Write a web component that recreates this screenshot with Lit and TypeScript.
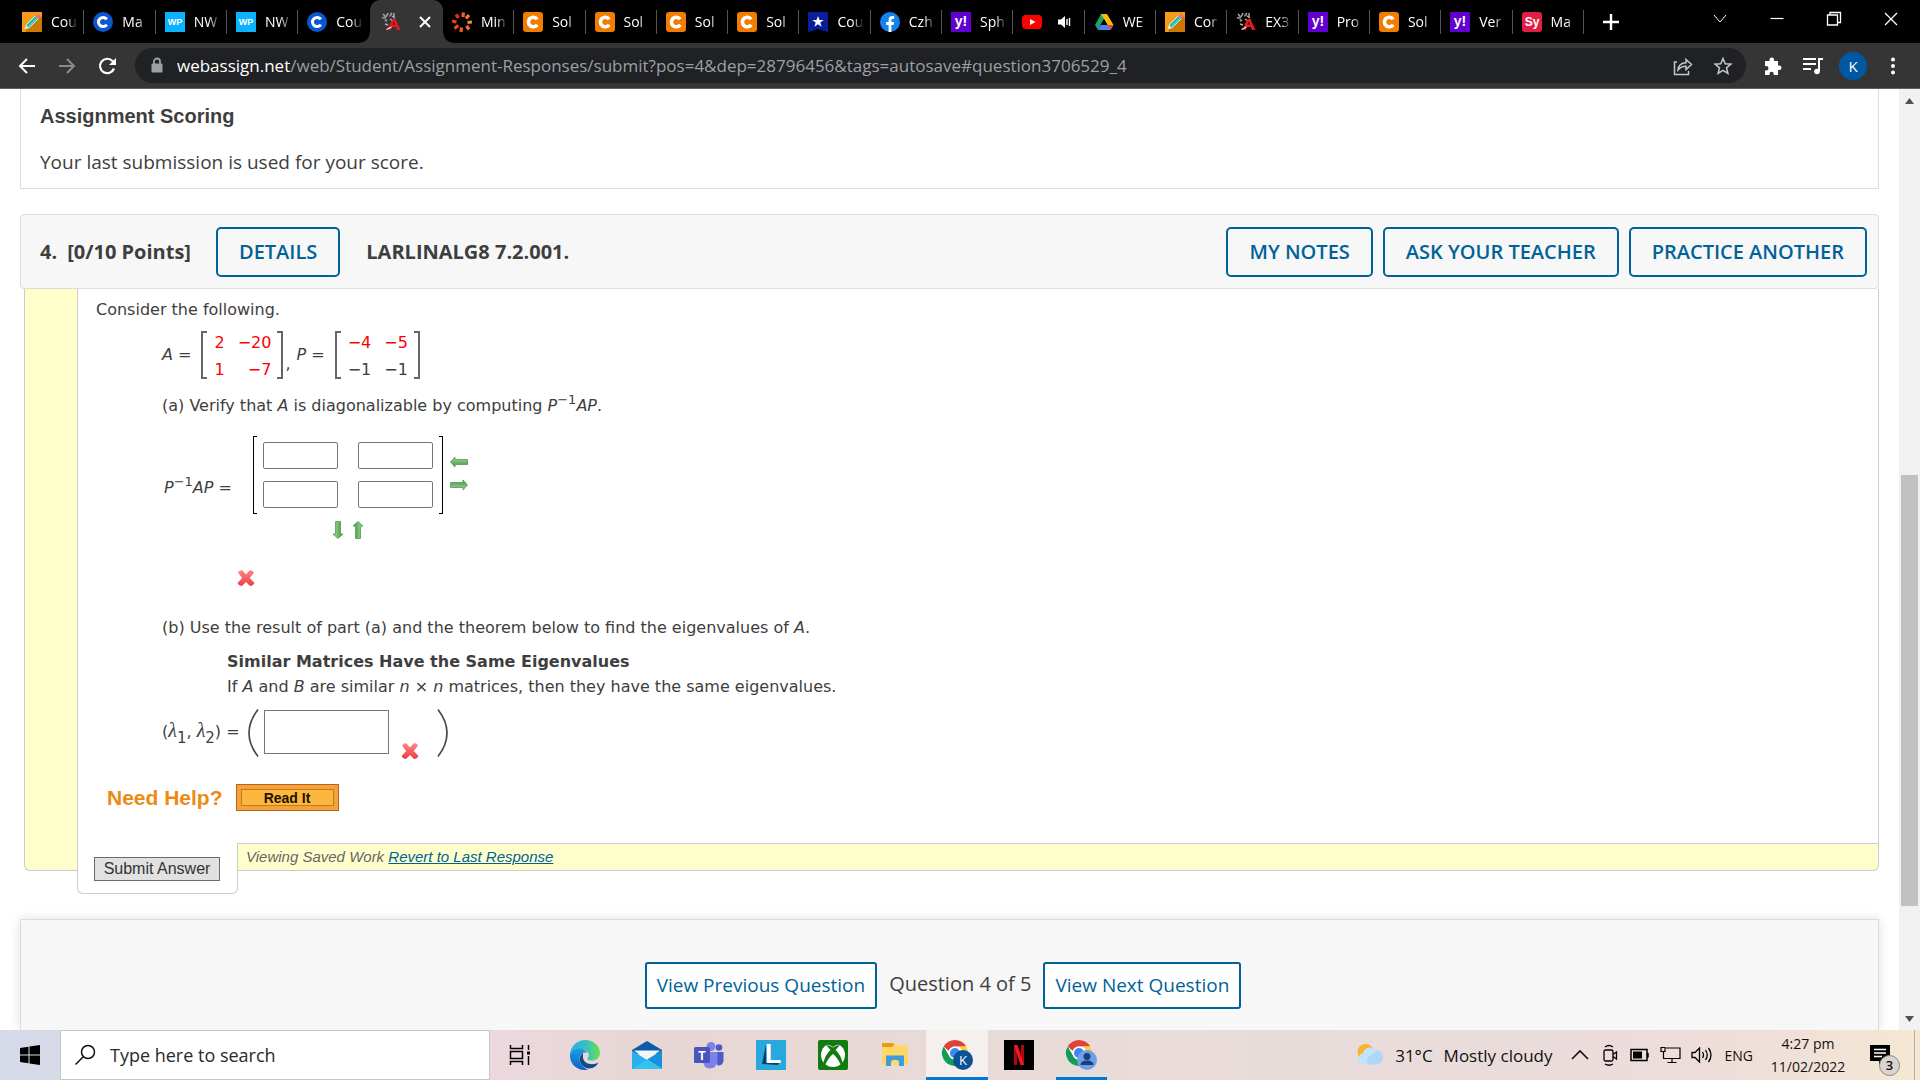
import { LitElement, html, css, svg, TemplateResult } from "lit";
import { customElement, property } from "lit/decorators.js";
import { classMap } from "lit/directives/class-map.js";

const letterTile = (bg: string, text: string, size: number, radius = 0, y = 15) => html`
  <svg class="fav" viewBox="0 0 20 20" aria-hidden="true">
    <rect width="20" height="20" rx=${radius} fill=${bg} />
    <text x="10" y=${y} font-size=${size} font-weight="700" fill="#fff" text-anchor="middle"
      font-family="Liberation Sans, sans-serif">${text}</text>
  </svg>`;

const favicons: Record<string, () => TemplateResult> = {
  pencil: () => html`<svg class="fav" viewBox="0 0 20 20" aria-hidden="true">
    <rect width="20" height="20" fill="#f59a1b" /><path d="M17 3 20 6v14H4l-1-3z" fill="#c97800" />
    <path d="M3 17l1.500-4.500L13.500 3.500l3 3L7.500 15.500z" fill="#35d0c0" stroke="#e8f6f4" stroke-width=".8" />
    <path d="M13 4l1.500-1.500q1-.8 2 .2l.8.8q1 1 0 2L16 7z" fill="#ef6f8f" />
    <path d="M3 17l1.200-3.600 2.400 2.400z" fill="#fbe3b4" /><path d="M5.500 13.500l8-8" stroke="#0f9f96" stroke-width="1" />
  </svg>`,
  coursera: () => html`<svg class="fav" viewBox="0 0 20 20" aria-hidden="true">
    <circle cx="10" cy="10" r="10" fill="#0a57d0" />
    <path d="M13.800 7.300A4.600 4.600 0 1 0 13.800 12.700" fill="none" stroke="#fff" stroke-width="3" /></svg>`,
  wp: () => letterTile("#0ab3fb", "WP", 9, 0, 13),
  chegg: () => html`<svg class="fav" viewBox="0 0 20 20" aria-hidden="true">
    <rect width="20" height="20" rx="3" fill="#f07c00" />
    <path d="M14.200 7.300A4.800 4.800 0 1 0 14.200 12.700" fill="none" stroke="#fff" stroke-width="3.600" /></svg>`,
  yahoo: () => letterTile("#6001d2", "y!", 14, 0, 14),
  symbolab: () => letterTile("#e01f46", "Sy", 12, 3, 14),
  webassign: () => html`<svg class="fav" viewBox="0 0 20 20" aria-hidden="true">
    <path d="M2 2l2 2M7 1l-2 4M9 3l2-2M13 1v5M1 6l4-1M4 9l2-1M9 7l3 2M4 12l3 1M11 4l3 2" stroke="#b0b0b0" stroke-width="1.400" />
    <path d="M2 5l3 3M8 4l3-1" stroke="#777" stroke-width="1.400" />
    <path d="M6 18L11.500 7l3 0 5 11h-3.500l-1.300-3h-3.600l-1.600 3z" fill="#e01b22" />
    <path d="M11.500 12.500h2.500l-1.200-3z" fill="#3a0508" /><path d="M5.500 17.500l5-2.500" stroke="#eee" stroke-width="1.200" />
  </svg>`,
  miro: () => html`<svg class="fav" viewBox="0 0 20 20" aria-hidden="true">
    <g stroke-width="3.200" fill="none">
      <path d="M11.500 .5l-.6 4.500" stroke="#ff5a3c" /><path d="M17 3l-3 3.500" stroke="#ff7a2c" />
      <path d="M20 10l-4.500 .5" stroke="#ff8a20" /><path d="M17 17.500l-2.500-3.700" stroke="#ff6b1f" />
      <path d="M9 20l.5-4.500" stroke="#ff5722" /><path d="M2.500 16.500l3.700-3" stroke="#f04a20" />
      <path d="M0 9l4.500 1" stroke="#e8401c" /><path d="M4 2.500l2.500 3.500" stroke="#d8361c" />
    </g></svg>`,
  star: () => html`<svg class="fav" viewBox="0 0 20 20" aria-hidden="true">
    <path d="M0 0h20v20l-10-3-10 3z" fill="#0a1e9c" />
    <path d="M10 4l1.500 4h4.200l-3.400 2.600 1.300 4.100L10 12.200l-3.600 2.500 1.300-4.100L4.300 8h4.200z" fill="#fff" />
  </svg>`,
  facebook: () => html`<svg class="fav" viewBox="0 0 20 20" aria-hidden="true">
    <circle cx="10" cy="10" r="10" fill="#1483f0" />
    <path d="M8.600 20v-7H6.200v-3h2.400V8q0-4 3.800-4 1 0 1.800.2v2.500h-1.300q-1.500 0-1.500 1.500V10h2.700l-.5 3h-2.200v7z" fill="#fff" />
  </svg>`,
  youtube: () => html`<svg class="fav" viewBox="0 0 20 20" aria-hidden="true">
    <rect y="3" width="20" height="14" rx="4" fill="#f00" /><path d="M8 7l5.500 3L8 13z" fill="#fff" />
  </svg>`,
  drive: () => html`<svg class="fav" viewBox="0 0 20 20" aria-hidden="true">
    <path d="M7 2h6L6.500 13 4 18 1 13z" fill="#1ea362" /><path d="M7 2h6l6.500 11h-6z" fill="#fbbc04" />
    <path d="M6.500 13H19.500l-3 5H4z" fill="#4285f4" /><path d="M13.500 13h6l-3 5z" fill="#ea4335" />
    <path d="M10 7.200L13.400 13H6.600z" fill="#000" />
  </svg>`,
};

interface Tab { icon: string; title: string; active?: boolean; audio?: boolean; }
const tabs: Tab[] = [
  { icon: "pencil", title: "Cou" }, { icon: "coursera", title: "Ma" },
  { icon: "wp", title: "NW" }, { icon: "wp", title: "NW" },
  { icon: "coursera", title: "Cou" }, { icon: "webassign", title: "", active: true },
  { icon: "miro", title: "Min" }, { icon: "chegg", title: "Sol" },
  { icon: "chegg", title: "Sol" }, { icon: "chegg", title: "Sol" },
  { icon: "chegg", title: "Sol" }, { icon: "star", title: "Cou" },
  { icon: "facebook", title: "Czh" }, { icon: "yahoo", title: "Sph" },
  { icon: "youtube", title: "", audio: true }, { icon: "drive", title: "WE" },
  { icon: "pencil", title: "Cor" }, { icon: "webassign", title: "EX3" },
  { icon: "yahoo", title: "Pro" }, { icon: "chegg", title: "Sol" },
  { icon: "yahoo", title: "Ver" }, { icon: "symbolab", title: "Ma" },
];

const lineIcon = (body: TemplateResult, size = 20, width = 2) => html`
  <svg width=${size} height=${size} viewBox="0 0 20 20" fill="none" stroke="currentColor"
    stroke-width=${width} aria-hidden="true">${body}</svg>`;

@customElement("browser-chrome")
export class BrowserChrome extends LitElement {
  static styles = css`
    :host { display: block; font-family: "Open Sans", "Noto Sans", sans-serif; color: #fff; }
    button { border: 0; padding: 0; margin: 0; background: none; color: inherit; font: inherit;
      display: flex; align-items: center; justify-content: center; flex: none; }
    svg { display: block; flex: none; }
    .strip { display: flex; height: 43px; background: #000; padding-left: 13px; }
    .tabs { display: flex; flex: 1; min-width: 0; }
    .tab { flex: 1 1 0; min-width: 0; justify-content: flex-start; padding: 0 3px 0 9px; gap: 9px;
      position: relative; font-size: 14px; line-height: 20px; }
    .tab::after { content: ""; position: absolute; right: 0; top: 10px; height: 24px; width: 1px; background: #555; }
    .tab.active, .tab.plain { z-index: 1; }
    .tab.plain::after, .tab.active::after { display: none; }
    .tab.active { background: #353535; border-radius: 10px 10px 0 0; gap: 14px; padding-left: 11px; }
    .tab.audio { gap: 12px; }
    .flare { position: absolute; bottom: 0; width: 10px; height: 10px; }
    .flare.left { left: -10px; background: radial-gradient(circle at 0 0, #0000 9px, #353535 10px); }
    .flare.right { right: -10px; background: radial-gradient(circle at 100% 0, #0000 9px, #353535 10px); }
    .fav { width: 20px; height: 20px; }
    .title { flex: 1; min-width: 0; white-space: nowrap; text-align: left;
      -webkit-mask-image: linear-gradient(90deg, #000 15px, #0000 27px); mask-image: linear-gradient(90deg, #000 15px, #0000 27px); }
    .controls { display: flex; width: 336px; flex: none; }
    .newtab { width: 54px; margin-right: 53px; }
    .win { width: 57px; height: 38px; }
    .bar { display: flex; align-items: center; height: 45px; background: #353535; border-bottom: 1px solid #5f6061;
      padding: 0 7px; }
    .nav { width: 40px; height: 35px; }
    .dim { color: #8a8a8a; }
    .omnibox { flex: 1; min-width: 0; display: flex; align-items: center; height: 35px; border-radius: 18px;
      background: #202124; margin: 0 7px 0 8px; padding: 0 3px 0 14px; font-size: 17px; line-height: 24px; }
    .lock { margin-right: 12px; }
    .path { flex: 1; min-width: 0; border: 0; outline: 0; padding: 0; background: none; font: inherit; color: #9aa0a6; }
    .avatar { width: 28px; height: 28px; border-radius: 50%; background: #0058a3; font-size: 15px; margin: 0 6px; }
    .soft { color: #c4c7c5; }
  `;
  render() {
    return html`
      <div class="strip">
        <div class="tabs" role="tablist">
          ${tabs.map((t, i) => html`
            <button role="tab" aria-selected=${t.active ? "true" : "false"}
              class=${classMap({ tab: true, active: !!t.active, audio: !!t.audio, plain: !!tabs[i + 1]?.active })}>
              ${t.active ? html`<span class="flare left"></span><span class="flare right"></span>` : ""}
              ${favicons[t.icon]()}
              ${t.active ? lineIcon(svg`<path d="M5 5l10 10M15 5L5 15" />`, 20) : ""}
              ${t.audio ? html`<svg width="20" height="16" viewBox="0 0 20 16" aria-hidden="true">
                <path d="M4 5.500h3l4-3.500v12L7 10.500H4z" fill="#fff" />
                <path d="M13 5v6M15.500 4v8" stroke="#fff" stroke-width="1.400" /></svg>` : ""}
              ${t.title ? html`<span class="title">${t.title}</span>` : ""}
            </button>`)}
        </div>
        <div class="controls">
          <button class="newtab" aria-label="New tab">${lineIcon(svg`<path d="M10 2v16M2 10h16" />`, 20, 2.4)}</button>
          <button class="win" aria-label="Search tabs">${lineIcon(svg`<path d="M4 6l6 7 6-7" />`, 20, 1)}</button>
          <button class="win" aria-label="Minimise">${lineIcon(svg`<path d="M3.500 9.500h13" />`, 20, 1.2)}</button>
          <button class="win" aria-label="Restore">${lineIcon(svg`<path d="M3.500 6h10v10h-10zM6 6V3.500h10.500V13.500H13.500" />`, 20, 1.3)}</button>
          <button class="win" aria-label="Close">${lineIcon(svg`<path d="M4 4l12 12M16 4L4 16" />`, 20, 1.3)}</button>
        </div>
      </div>
      <div class="bar">
        <button class="nav" aria-label="Back">${lineIcon(svg`<path d="M18 10H3M10 3l-7 7 7 7" />`)}</button>
        <button class="nav dim" aria-label="Forward">${lineIcon(svg`<path d="M2 10h15M10 3l7 7-7 7" />`)}</button>
        <button class="nav" aria-label="Reload">${lineIcon(svg`<path d="M17 12.500A7.200 7.200 0 1 1 15.500 5l2 2" /><path d="M19 2v7h-7z" fill="currentColor" stroke="none" />`, 20, 2.2)}</button>
        <div class="omnibox">
          <svg class="lock" width="16" height="18" viewBox="0 0 16 18" aria-hidden="true">
            <rect x="2.500" y="6.500" width="11" height="9" rx="1" fill="#9aa0a6" />
            <path d="M5 7V4.500a3 3 0 0 1 6 0V7" fill="none" stroke="#9aa0a6" stroke-width="1.800" /></svg>
          <label for="url">webassign.net</label><input id="url" class="path"
            value="/web/Student/Assignment-Responses/submit?pos=4&dep=28796456&tags=autosave#question3706529_4" />
          <button class="nav soft" aria-label="Share">${lineIcon(svg`<path d="M4 6H1.500v12.500h14V15M5 14q.5-7 8-7.300V3.500l5.500 5-5.500 5v-3.200Q8 10.300 5 14z" />`, 20, 1.5)}</button>
          <button class="nav soft" aria-label="Bookmark">${lineIcon(svg`<path d="M10 2.500l2.200 5.300 5.700.4-4.400 3.600 1.400 5.600-4.900-3.100-4.900 3.100 1.400-5.600L2.100 8.200l5.700-.4z" />`, 20, 1.5)}</button>
        </div>
        <button class="nav" aria-label="Extensions"><svg width="20" height="20" viewBox="0 0 20 20" aria-hidden="true">
          <path d="M2 5h4.500V3.800a2.300 2.300 0 0 1 4.600 0V5H15v4.500h1.200a2.300 2.300 0 0 1 0 4.600H15V19h-4.300v-1.200a2.100 2.100 0 0 0-4.200 0V19H2v-4.500h1.200a2.300 2.300 0 0 0 0-4.600H2z" fill="#fff" /></svg></button>
        <button class="nav" aria-label="Media">${lineIcon(svg`<path d="M0 3h13M0 8h13M0 13h8M16 15V3h4" /><circle cx="14" cy="15.500" r="2.800" fill="currentColor" stroke="none" />`, 20, 2)}</button>
        <button class="avatar" aria-label="Profile">K</button>
        <button class="nav" aria-label="Menu"><svg width="6" height="20" viewBox="0 0 6 20" aria-hidden="true">
          <g fill="#fff"><circle cx="3" cy="3.500" r="2" /><circle cx="3" cy="10" r="2" /><circle cx="3" cy="16.500" r="2" /></g></svg></button>
      </div>`;
  }
}

@customElement("num-matrix")
export class NumMatrix extends LitElement {
  @property({ attribute: false }) rows: { v: string; red?: boolean }[][] = [];
  static styles = css`
    :host { display: inline-flex; align-items: center; height: 48px; }
    .edge { box-sizing: border-box; width: 6px; align-self: stretch; border: 2px solid #666; }
    .l { border-right: 0; } .r { border-left: 0; }
    table { border-collapse: collapse; margin-top: 2px; }
    td { padding: 0 6px 0 7px; text-align: right; line-height: 27px; }
    .red { color: #f00; }
  `;
  render() {
    return html`<span class="edge l"></span>
      <table><tbody>${this.rows.map(r => html`<tr>${r.map(c => html`<td class=${c.red ? "red" : ""}>${c.v}</td>`)}</tr>`)}</tbody></table>
      <span class="edge r"></span>`;
  }
}

const cross = html`<svg width="18" height="18" viewBox="0 0 18 18" role="img" aria-label="Incorrect">
  <defs><linearGradient id="x" x2="0" y2="1"><stop offset="0" stop-color="#ff8585" /><stop offset="1" stop-color="#ea3f46" /></linearGradient></defs>
  <path d="M1 3.500Q3.500 .5 5.500 1.500L9 5.500 12.500 1.500q2.500-1 4.500 2L12.800 9l4.700 5q-1.500 3.500-4.500 3L9 13 5 17q-3 .5-4.500-3L5.200 9z" fill="url(#x)" />
</svg>`;

const arrow = (angle: number) => html`
  <svg width="18" height="18" viewBox="0 0 18 18" aria-hidden="true">
    <defs><linearGradient id="g" x2="0" y2="1"><stop offset="0" stop-color="#a5dc9c" /><stop offset="1" stop-color="#3f9142" /></linearGradient></defs>
    <path transform="rotate(${angle} 9 9)" d="M.5 9L5 4v2.500h12.500v5H5V14z" fill="url(#g)" stroke="#4d9c50" stroke-width=".8" />
  </svg>`;

const inv = html`<i>P</i><sup>−1</sup><i>AP</i>`;

@customElement("question-card")
export class QuestionCard extends LitElement {
  static styles = css`
    :host { display: block; }
    svg { display: block; }
    .head { display: flex; align-items: center; height: 73px; border: 1px solid #ddd; border-radius: 4px;
      background: #f7f7f7; padding: 0 11px 0 19px; gap: 10px; font-size: 20px; }
    .head strong { font-weight: 700; }
    .head .code { margin-left: 16px; flex: 1; }
    .head .pts { margin-right: 15px; }
    .btn { height: 50px; padding: 0 21px; border: 2px solid #006298; border-radius: 5px; background: none;
      color: #006298; font: 600 20px/24px "Open Sans", sans-serif; }
    .body { display: flex; margin-left: 4px; }
    .strip { width: 52px; flex: none; margin-bottom: 23px; background: #ffc; border: 1px solid #ccc; border-top: 0; border-right: 0;
      border-radius: 0 0 0 6px; }
    .main { flex: 1; min-width: 0; }
    .problem { border: 1px solid #ccc; border-width: 0 1px; padding: 11px 0 32px 18px;
      font: 16px/20px "DejaVu Sans", Verdana, sans-serif; color: #3e3e3e; }
    p { margin: 0; }
    sup, sub { line-height: 0; }
    sup { font-size: 13px; vertical-align: 7px; } sub { font-size: 15px; vertical-align: -6px; }
    .indent { padding-left: 66px; }
    .given { display: flex; align-items: center; height: 48px; margin: 11px 0 17px; }
    .given num-matrix { margin-left: 10px; }
    .given .comma { align-self: flex-end; margin: 0 6px 5px 2px; }
    .answer { display: flex; align-items: center; margin-top: 20px; padding-left: 2px; gap: 21px; }
    .grid { display: grid; grid-template-columns: auto auto; column-gap: 7px; row-gap: 7px; }
    .mat { display: grid; grid-template-columns: 75px 75px; gap: 12px 20px; padding: 6px 10px; position: relative; }
    .mat::before, .mat::after { content: ""; position: absolute; top: 0; bottom: 0; width: 3px; border: 1px solid #000; }
    .mat::before { left: 0; border-right: 0; } .mat::after { right: 0; border-left: 0; }
    .cell, .wide { box-sizing: border-box; border: 1px solid #767676; border-radius: 2px; background: #fff; padding: 1px 4px; font: inherit; }
    .cell { width: 75px; height: 27px; }
    .wide { width: 125px; height: 44px; border-radius: 0; margin: 1px 12px 0 5px; }
    .steps { display: flex; align-items: center; justify-content: center; gap: 2px; }
    .steps.v { flex-direction: column; gap: 5px; padding-bottom: 4px; }
    .step { border: 0; padding: 0; margin: 0; background: none; display: block; }
    .mark { margin: 30px 0 31px 141px; }
    .theorem { margin: 11px 0 10px 65px; line-height: 25px; }
    .pair { display: flex; height: 51px; }
    .pair label { padding-top: 13px; margin-right: 7px; }
    .pair .x { align-self: flex-end; margin-right: 18px; }
    .lam { font-family: "Liberation Serif", serif; font-size: 20px; font-style: italic; line-height: 0; }
    .help { display: flex; align-items: center; gap: 13px; margin: 24px 0 0 11px; }
    .need { font: 700 21px/27px "Liberation Sans", sans-serif; color: #ec8a14; }
    .read { box-sizing: border-box; width: 103px; height: 27px; padding: 0; border: 1px solid #b5651d; background: #fbb83c;
      box-shadow: inset 0 0 0 4px #f6a13a, inset 0 0 0 5px #c27b20; font: 700 14px/20px "Liberation Sans", sans-serif; color: #1c1200; }
    .foot { display: flex; align-items: flex-start; }
    .submit { box-sizing: border-box; width: 161px; height: 51px; border: 1px solid #ccc; border-top: 0; border-radius: 0 0 6px 6px;
      padding: 14px 0 0 16px; flex: none; }
    .submit button { box-sizing: border-box; width: 126px; height: 24px; padding: 0; border: 1px solid #6b6b6b; background: #e1e1e1;
      font: 16px/20px "Liberation Sans", sans-serif; color: #333; }
    .saved { flex: 1; box-sizing: border-box; height: 28px; background: #ffc; border: 1px solid #ccc; border-left: 0;
      border-radius: 0 0 6px 0; padding-left: 8px; font: italic 15px/26px "Liberation Sans", sans-serif; color: #666; }
    .saved a { color: #006298; }
  `;
  render() {
    return html`
      <header class="head">
        <strong>4.</strong><strong class="pts">[0/10 Points]</strong>
        <button class="btn">DETAILS</button>
        <strong class="code">LARLINALG8 7.2.001.</strong>
        <button class="btn">MY NOTES</button>
        <button class="btn">ASK YOUR TEACHER</button>
        <button class="btn">PRACTICE ANOTHER</button>
      </header>
      <div class="body">
        <div class="strip"></div>
        <div class="main">
          <section class="problem">
            <p>Consider the following.</p>
            <div class="indent">
              <div class="given">
                <span><i>A</i> =</span>
                <num-matrix .rows=${[[{ v: "2", red: true }, { v: "−20", red: true }], [{ v: "1", red: true }, { v: "−7", red: true }]]}></num-matrix>
                <span class="comma">,</span><span><i>P</i> =</span>
                <num-matrix .rows=${[[{ v: "−4", red: true }, { v: "−5", red: true }], [{ v: "−1" }, { v: "−1" }]]}></num-matrix>
              </div>
              <p>(a) Verify that <i>A</i> is diagonalizable by computing ${inv}.</p>
              <div class="answer">
                <span>${inv} =</span>
                <div class="grid">
                  <div class="mat">
                    <input class="cell" aria-label="Row 1, column 1" /><input class="cell" aria-label="Row 1, column 2" />
                    <input class="cell" aria-label="Row 2, column 1" /><input class="cell" aria-label="Row 2, column 2" />
                  </div>
                  <div class="steps v">
                    <button class="step" aria-label="Remove column">${arrow(0)}</button>
                    <button class="step" aria-label="Add column">${arrow(180)}</button>
                  </div>
                  <div class="steps">
                    <button class="step" aria-label="Add row">${arrow(-90)}</button>
                    <button class="step" aria-label="Remove row">${arrow(90)}</button>
                  </div>
                </div>
              </div>
            </div>
            <div class="mark">${cross}</div>
            <div class="indent">
              <p>(b) Use the result of part (a) and the theorem below to find the eigenvalues of <i>A</i>.</p>
              <div class="theorem">
                <strong>Similar Matrices Have the Same Eigenvalues</strong>
                <p>If <i>A</i> and <i>B</i> are similar <i>n</i> × <i>n</i> matrices, then they have the same eigenvalues.</p>
              </div>
              <div class="pair">
                <label for="lambda">(<span class="lam">λ</span><sub>1</sub>, <span class="lam">λ</span><sub>2</sub>) =</label>
                <svg width="12" height="48" viewBox="0 0 12 48" fill="none" stroke="#444" stroke-width="1.600" aria-hidden="true"><path d="M11 .5Q-7 24 11 47.500" /></svg>
                <input id="lambda" class="wide" />
                <span class="x">${cross}</span>
                <svg width="12" height="48" viewBox="0 0 12 48" fill="none" stroke="#444" stroke-width="1.600" aria-hidden="true"><path d="M1 .5Q19 24 1 47.500" /></svg>
              </div>
            </div>
            <div class="help"><span class="need">Need Help?</span><button class="read">Read It</button></div>
          </section>
          <div class="foot">
            <div class="submit"><button>Submit Answer</button></div>
            <div class="saved">Viewing Saved Work <a href="#">Revert to Last Response</a></div>
          </div>
        </div>
      </div>`;
  }
}

const chromeLogo = svg`
  <circle cx="14" cy="14" r="13" fill="#fff" />
  <path d="M14 1a13 13 0 0 1 11.300 6.500H14a6.500 6.500 0 0 0-6.200 4.500L2.700 7.500A13 13 0 0 1 14 1z" fill="#db4437" />
  <path d="M25.300 7.500A13 13 0 0 1 14 27l5.600-9.700A6.500 6.500 0 0 0 17.500 7.500z" fill="#ffcd40" />
  <path d="M2.700 7.500l5.700 9.800a6.500 6.500 0 0 0 7.600 3L14 27A13 13 0 0 1 2.700 7.500z" fill="#0f9d58" />
  <circle cx="14" cy="14" r="6.500" fill="#fff" /><circle cx="14" cy="14" r="5" fill="#4285f4" />`;

const apps: { name: string; cls?: string; icon: TemplateResult }[] = [
  { name: "Task view", cls: "view", icon: html`<svg width="22" height="22" viewBox="0 0 22 22" fill="none" stroke="#000" stroke-width="1.500" aria-hidden="true">
    <path d="M1.500 1v3.500h12V1M1.500 21v-3.500h12V21M1.500 7.500h12v7h-12zM19.500 1v5M19.500 12v9" /><rect x="18" y="7.500" width="3" height="3" fill="#000" stroke="none" /></svg>` },
  { name: "Edge", icon: html`<svg width="30" height="30" viewBox="0 0 30 30" aria-hidden="true">
    <defs><linearGradient id="e1" x1="0" x2="1"><stop offset="0" stop-color="#2bb1e6" /><stop offset=".55" stop-color="#35c1c0" /><stop offset="1" stop-color="#6be04b" /></linearGradient>
    <linearGradient id="e2" x2="0" y2="1"><stop offset="0" stop-color="#1b9de2" /><stop offset="1" stop-color="#0b62c4" /></linearGradient></defs>
    <path d="M0 14C1 5 8 0 15 0c9 0 15 6 15 13 0 5-4 7.500-8 7.500-4.500 0-5.500-1.500-4-3 2-3 0-7.500-5-8C7 9 2 11 0 14z" fill="url(#e1)" />
    <path d="M0 14c2-4.500 7-6 12-5 3 .8 5 2.500 5.500 4-4-1.500-8 1-8 6 0 5 4 9 9 10.500C9 32-1 25 0 14z" fill="url(#e2)" />
    <path d="M13 13c-3 2-4.500 6-2.500 10 3 6 13 8.500 18-.5-6 3.500-15 1.500-15.500-5-.2-2 .2-3.500 0-4.500z" fill="#114a8b" />
  </svg>` },
  { name: "Mail", icon: html`<svg width="30" height="30" viewBox="0 0 30 30" aria-hidden="true">
    <path d="M0 10L15 1l15 9v4H0z" fill="#0b5cad" /><path d="M2 10.500h26L15 21z" fill="#f5f5f5" />
    <path d="M0 10.500L15 20v9H0z" fill="#28b0ea" /><path d="M30 10.500V29L15 19.500z" fill="#1a8fe0" /><path d="M0 29l15-9.500L30 29z" fill="#33c1f0" /></svg>` },
  { name: "Teams", icon: html`<svg width="30" height="30" viewBox="0 0 30 30" aria-hidden="true">
    <circle cx="25" cy="7.500" r="3.300" fill="#5059c9" /><path d="M20 12h9.500v9q-1 5-6 4.500z" fill="#5059c9" />
    <circle cx="17" cy="6.500" r="4.500" fill="#7b83eb" /><path d="M9 12h14.500v9q-1 7.500-7.500 7.500T9 21z" fill="#7b83eb" />
    <rect y="7" width="16" height="16" rx="1.500" fill="#4b53bc" />
    <text x="8" y="19.500" font-size="12" font-weight="700" fill="#fff" text-anchor="middle" font-family="Liberation Sans, sans-serif">T</text></svg>` },
  { name: "L app", icon: html`<svg width="30" height="30" viewBox="0 0 30 30" aria-hidden="true">
    <rect width="30" height="30" fill="#28a9dd" /><path d="M10 4L6 24l16 1 2-4H11z" fill="#0d4063" />
    <text x="17" y="23" font-size="27" font-weight="700" fill="#fff" text-anchor="middle" font-family="Liberation Sans, sans-serif">L</text></svg>` },
  { name: "Xbox", icon: html`<svg width="30" height="30" viewBox="0 0 30 30" aria-hidden="true">
    <rect width="30" height="30" rx="2" fill="#107c10" /><circle cx="15" cy="15" r="12" fill="#fff" />
    <path d="M8 5q3-1 7 2 4-3 7-2-3-3-7-3T8 5zM12.500 10Q7.500 14 5 24l2 1q4-8 8-11 4 3 8 11l2-1q-2.500-10-7.500-14L22 5q-4 0-7 2.500Q12 5 8 5z" fill="#107c10" /></svg>` },
  { name: "File Explorer", icon: html`<svg width="28" height="28" viewBox="0 0 28 28" aria-hidden="true">
    <path d="M1 2h11l2 3v6H1z" fill="#e3a008" /><path d="M1 6h10l2-2h14v20H1z" fill="#ffd766" />
    <path d="M5 25V14.500h18V25h-5v-5q-4-2.500-8 0v5z" fill="#3d9be0" /></svg>` },
  { name: "Chrome", cls: "active", icon: html`<svg width="32" height="32" viewBox="0 0 32 32" aria-hidden="true">${chromeLogo}
    <circle cx="22" cy="21" r="10" fill="#0b5394" /><text x="22" y="25.500" font-size="13" fill="#fff" text-anchor="middle" font-family="Open Sans, sans-serif">K</text></svg>` },
  { name: "Netflix", icon: html`<svg width="30" height="30" viewBox="0 0 30 30" aria-hidden="true">
    <rect width="30" height="30" fill="#000" /><path d="M10 5h3v20h-3zM17 5h3v20h-3z" fill="#b1060f" /><path d="M10 5h3.500L20 25h-3.500z" fill="#f11a24" /></svg>` },
  { name: "Chrome profile", cls: "open", icon: html`<svg width="32" height="32" viewBox="0 0 32 32" aria-hidden="true">${chromeLogo}
    <circle cx="22" cy="21" r="10" fill="#6e9fe8" /><circle cx="22" cy="17.500" r="3.500" fill="#1b3f77" /><path d="M15.500 26q0-4.500 6.500-4.500t6.500 4.500z" fill="#1b3f77" /></svg>` },
];

@customElement("task-bar")
export class TaskBar extends LitElement {
  static styles = css`
    :host { display: flex; height: 50px; font-family: "Open Sans", "Noto Sans", sans-serif; color: #111;
      background: linear-gradient(90deg, #d6dae8 0, #dad9e4 12%, #ecd8dd 26%, #e6d7d5 33%, #e9dbd7 55%, #e8dcdb 68%, #ecdcdc 85%, #efe0d8 93%, #f5e8d3 100%); }
    button { border: 0; padding: 0; margin: 0; background: none; color: inherit; font: inherit;
      display: flex; align-items: center; justify-content: center; flex: none; }
    svg { display: block; flex: none; }
    .start { width: 60px; }
    .search { box-sizing: border-box; display: flex; align-items: center; width: 430px; background: #fff; border: 1px solid #c6c6c6;
      padding-left: 13px; gap: 14px; }
    .search input { flex: 1; min-width: 0; border: 0; outline: 0; padding: 0; background: none; font: 18px/24px "Open Sans", sans-serif; color: #222; }
    .search input::placeholder { color: #2a2a2a; opacity: 1; }
    .apps { display: flex; flex: 1; }
    .app { width: 62px; box-sizing: border-box; position: relative; }
    .app.view { width: 64px; padding-right: 4px; }
    .app.active { background: #f5f0ee; box-shadow: inset 0 -3px #0078d7; }
    .app.open::after { content: ""; position: absolute; left: 6px; right: 5px; bottom: 0; height: 3px; background: #0078d7; }
    .tray { display: flex; align-items: center; padding-right: 5px; }
    .weather { gap: 11px; font-size: 17px; margin-right: 17px; }
    .icons { display: flex; align-items: center; gap: 10px; }
    .lang { font-size: 14px; margin: 0 16px 0 12px; }
    .clock { flex-direction: column; font-size: 14px; line-height: 23px; width: 78px; }
    .note { position: relative; width: 50px; height: 50px; margin-left: 17px; justify-content: flex-start; padding-left: 6px; }
    .count { position: absolute; left: 15px; top: 25px; box-sizing: border-box; width: 21px; height: 21px; border-radius: 50%; border: 1px solid #888;
      background: #d8d4cf; font-size: 13px; line-height: 19px; font-weight: 600; text-align: center; }
    .edge { width: 1px; align-self: stretch; background: #b8ad9f; }
  `;
  render() {
    return html`
      <button class="start" aria-label="Start"><svg width="20" height="20" viewBox="0 0 20 20" aria-hidden="true">
        <path d="M0 3l8.500-1.200v7.700H0zM9.500 1.600L20 0v9.500H9.500zM0 10.500h8.500v7.700L0 17zM9.500 10.500H20V20L9.500 18.400z" /></svg></button>
      <div class="search">
        <svg width="22" height="22" viewBox="0 0 22 22" fill="none" stroke="#111" stroke-width="1.500" aria-hidden="true"><circle cx="14" cy="8" r="6.500" /><path d="M9.300 12.700L1.500 20.500" /></svg>
        <input type="text" aria-label="Search" placeholder="Type here to search" />
      </div>
      <div class="apps">${apps.map(a => html`<button class="app ${a.cls ?? ""}" aria-label=${a.name}>${a.icon}</button>`)}</div>
      <div class="tray">
        <button class="weather">
          <svg width="27" height="24" viewBox="0 0 27 24" aria-hidden="true"><circle cx="8.500" cy="9" r="8" fill="#f7b42c" />
            <path d="M7 21.500a5.500 5.500 0 0 1-1-11 7 7 0 0 1 12.500-3.200A7 7 0 0 1 26 14a7 7 0 0 1-6.500 7.500z" fill="#c3e3f8" />
            <path d="M12 21.500q-5-3 0-8 5-2 8-6 6 1 6 7t-6.500 7z" fill="#9fd0f2" opacity=".6" /></svg>
          <span>31°C</span><span>Mostly cloudy</span>
        </button>
        <div class="icons">
          ${lineIcon(svg`<path d="M2 14l8-8 8 8" />`, 20, 1.6)}
          <svg width="20" height="22" viewBox="0 0 20 22" fill="none" stroke="#000" stroke-width="1.300" aria-hidden="true"><rect x="4" y="6" width="9" height="11" rx="1.500" /><path d="M13 10.500l3.500-2.500v7L13 12.500M5 3q4-3 8 0M5 20q4 2.500 8 0" /></svg>
          <svg width="20" height="14" viewBox="0 0 20 14" aria-hidden="true"><path d="M1 1.500h16v11H1zM18 5v4.500" fill="none" stroke="#000" stroke-width="1.500" /><rect x="3" y="3.500" width="9" height="7" /></svg>
          <svg width="21" height="18" viewBox="0 0 21 18" fill="none" stroke="#000" stroke-width="1.200" aria-hidden="true"><path d="M6 2h14v10.500H3.500V6M12 12.500V16M7.500 16.500h9M1 1.500h4v4H1z" /></svg>
          <svg width="22" height="18" viewBox="0 0 22 18" fill="none" stroke="#000" stroke-width="1.300" aria-hidden="true"><path d="M1 6.500h3L8.500 2v14L4 11.500H1zM11.500 6q2 3 0 6M14.500 4q3.500 5 0 10M17.500 2q5 7 0 14" /></svg>
        </div>
        <button class="lang">ENG</button>
        <button class="clock"><span>4:27 pm</span><span>11/02/2022</span></button>
        <button class="note" aria-label="Notifications">
          <svg width="22" height="22" viewBox="0 0 22 22" aria-hidden="true"><path d="M0 1h20v16h-7l-4 4v-4H0z" /><path d="M4 5.500h12M4 9h12M4 12.500h8" stroke="#fff" stroke-width="1.300" /></svg>
          <span class="count">3</span>
        </button>
        <span class="edge"></span>
      </div>`;
  }
}

@customElement("app-root")
export class AppRoot extends LitElement {
  static styles = css`
    :host { display: flex; flex-direction: column; height: 100vh; overflow: hidden; background: #fff;
      font-family: "Open Sans", "Noto Sans", sans-serif; color: #3e3e3e; }
    .view { flex: 1; min-height: 0; display: flex; overflow: hidden; }
    .page { flex: 1; min-width: 0; padding: 0 20px; display: flex; flex-direction: column; }
    .scoring { border: 1px solid #ddd; border-top: 0; padding: 14px 19px 12px; margin-bottom: 25px; }
    h2 { margin: 0 0 20px; font: 700 20px/26px "Liberation Sans", sans-serif; }
    p { margin: 0; font-size: 19px; line-height: 27px; }
    .pager { flex: 1; margin-top: 25px; border: 1px solid #ddd; border-bottom: 0; background: #f7f7f7; box-shadow: 0 0 10px #0002;
      display: flex; justify-content: center; align-items: flex-start; gap: 12px; padding: 42px 13px 0 0; font-size: 20px; line-height: 43px; }
    .pager button { height: 47px; padding: 0 10px; border: 2px solid #006298; border-radius: 3px; background: #fff; color: #006298;
      font-family: inherit; font-size: 19px; line-height: 43px; }
    .scroll { width: 21px; flex: none; background: #f1f1f1; display: flex; flex-direction: column; align-items: center; padding: 9px 0 8px;
      box-sizing: border-box; }
    .gap { flex: 371; } .rest { flex: 110; }
    .thumb { flex: 431; width: 17px; background: #c1c1c1; }
  `;
  render() {
    return html`
      <browser-chrome></browser-chrome>
      <div class="view">
        <main class="page">
          <section class="scoring">
            <h2>Assignment Scoring</h2>
            <p>Your last submission is used for your score.</p>
          </section>
          <question-card></question-card>
          <nav class="pager">
            <button>View Previous Question</button><span>Question 4 of 5</span><button>View Next Question</button>
          </nav>
        </main>
        <div class="scroll" aria-hidden="true">
          <svg width="9" height="6" viewBox="0 0 9 6"><path d="M0 6L4.500 0 9 6z" fill="#505050" /></svg>
          <span class="gap"></span><span class="thumb"></span><span class="rest"></span>
          <svg width="9" height="6" viewBox="0 0 9 6"><path d="M0 0L4.500 6 9 0z" fill="#505050" /></svg>
        </div>
      </div>
      <task-bar></task-bar>`;
  }
}
